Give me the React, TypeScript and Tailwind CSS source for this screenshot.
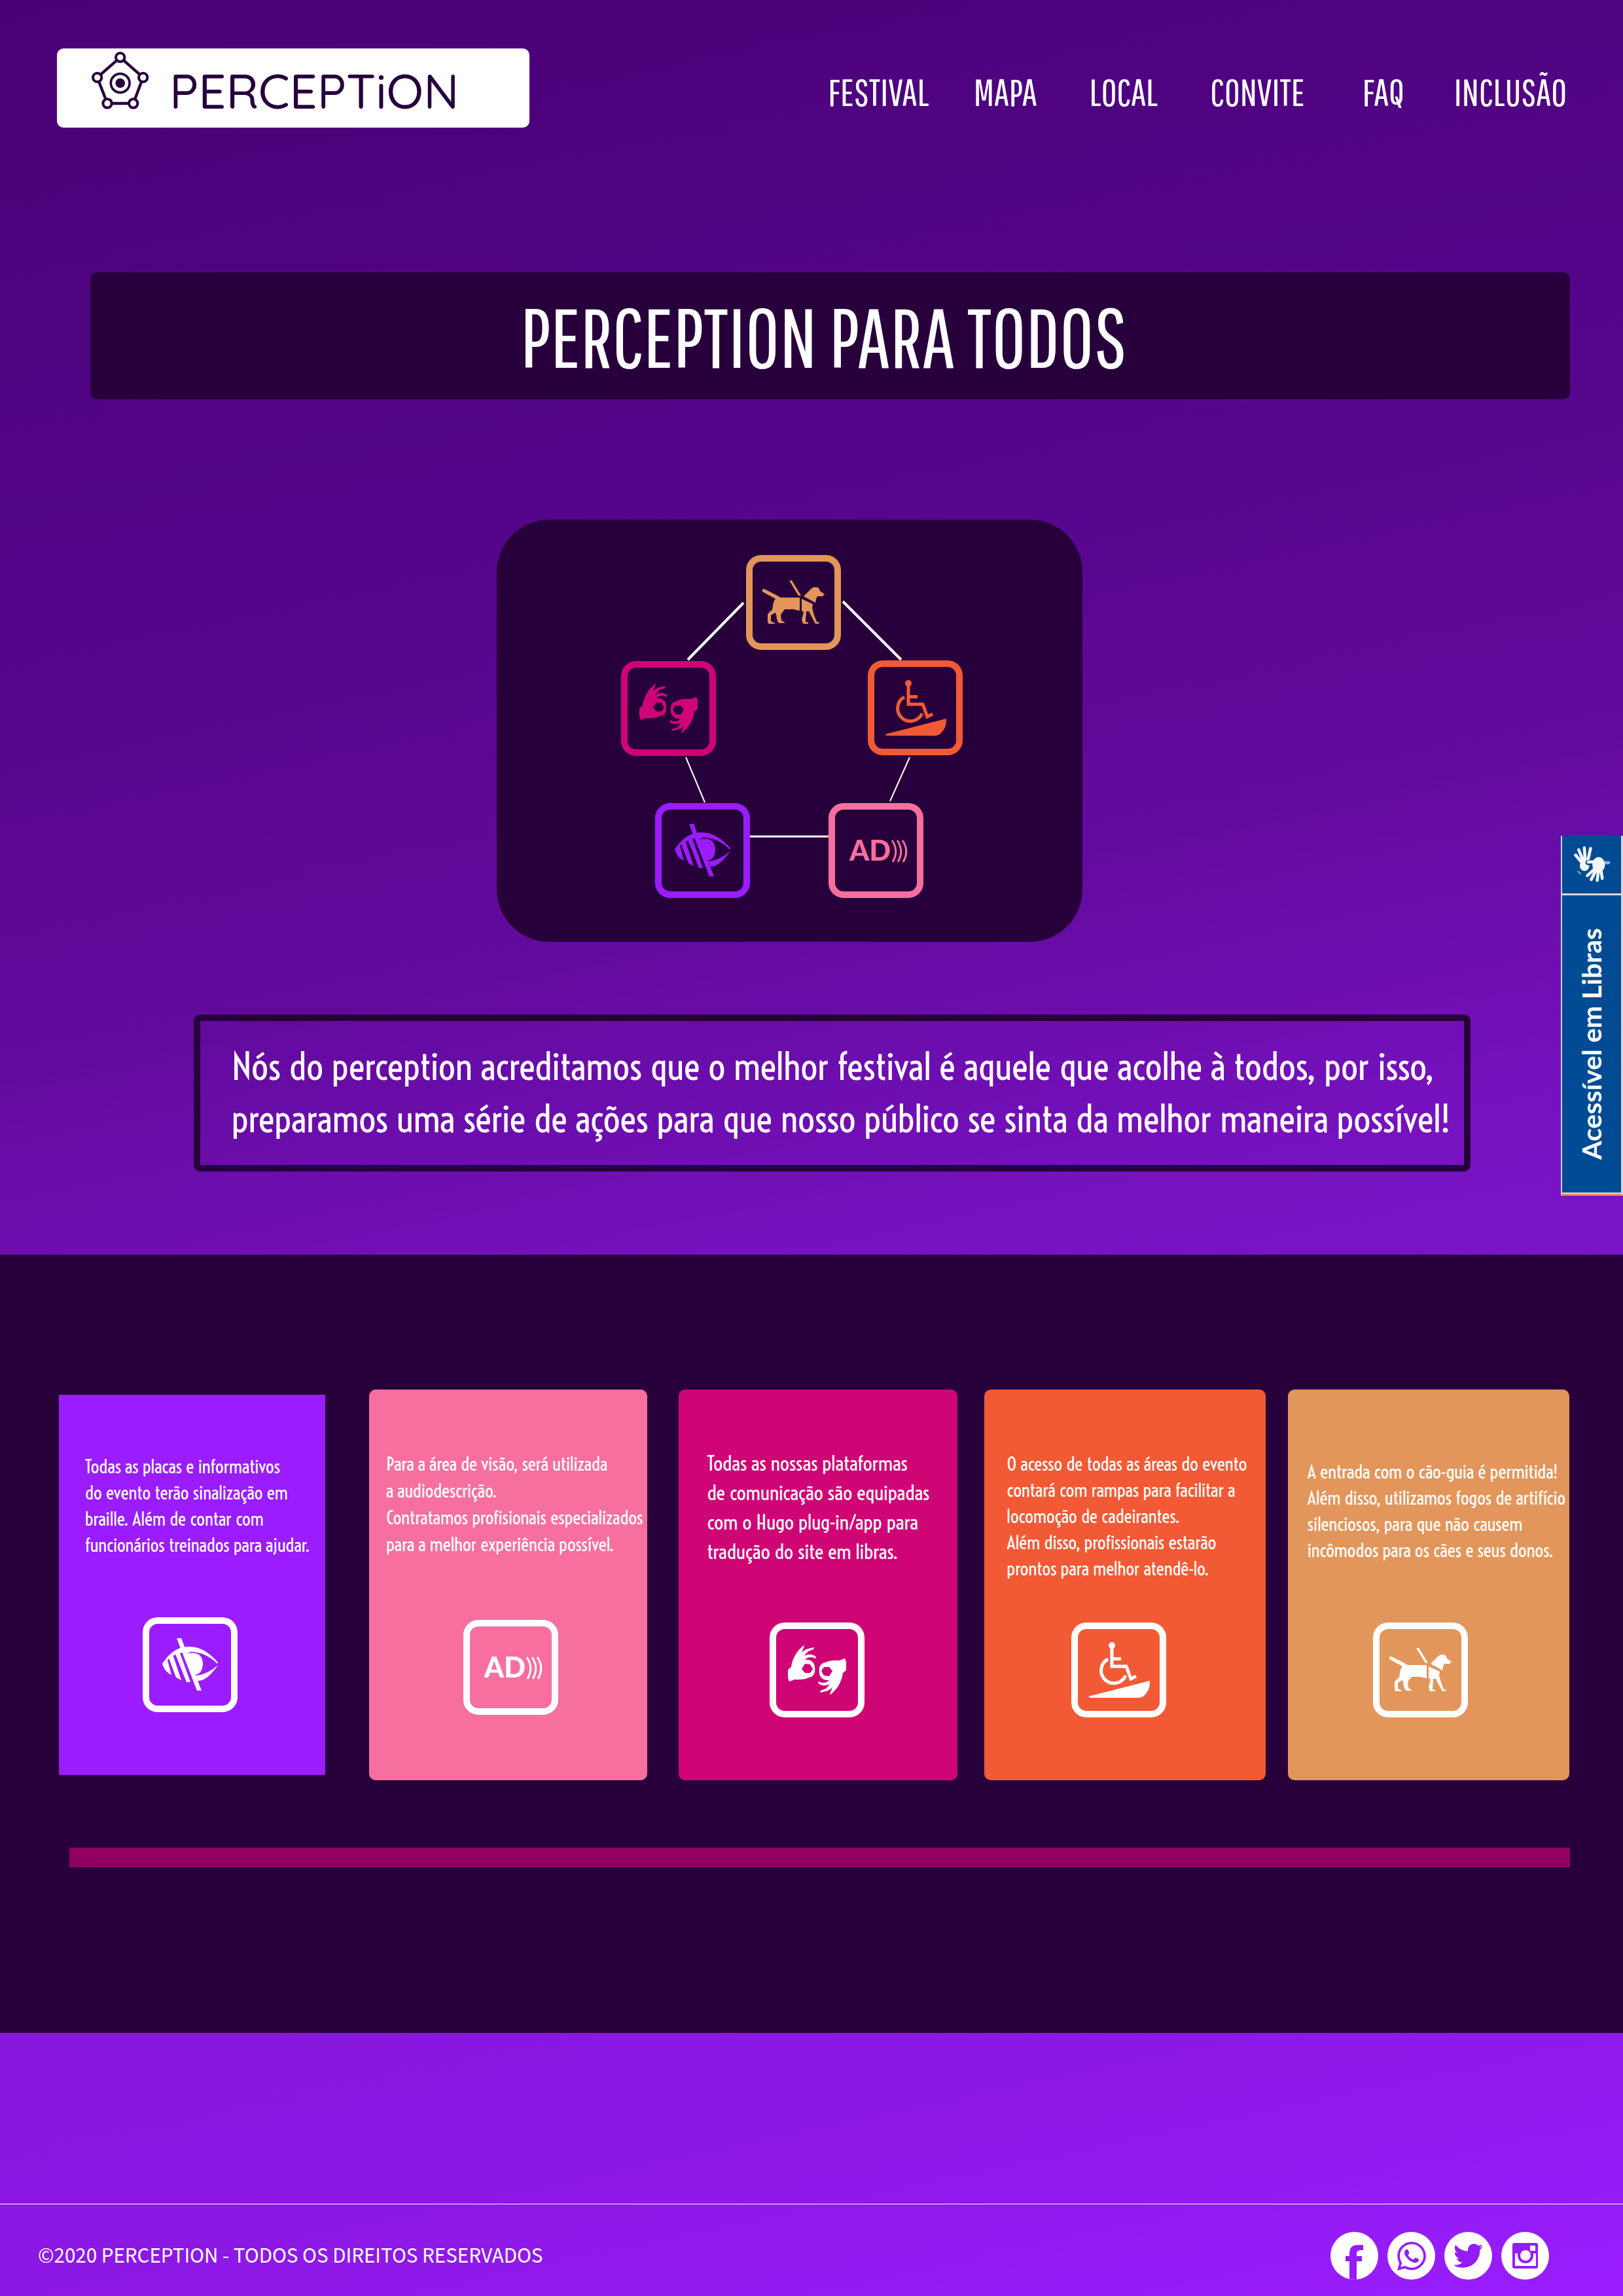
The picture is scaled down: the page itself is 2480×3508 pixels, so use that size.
import React from "react";
import { FaTwitter, FaWhatsapp } from "react-icons/fa";

const navItems = [
  { label: "Festival", gap: "" },
  { label: "Mapa", gap: "ml-17" },
  { label: "Local", gap: "ml-20" },
  { label: "Convite", gap: "ml-20" },
  { label: "FAQ", gap: "ml-22" },
  { label: "Inclusão", gap: "ml-19" },
];

function DogIcon() {
  return (
    <g fill="currentColor">
      <path d="M66 39H70L84 62H80Z" />
      <path d="M25 52L28 52L46 61Q50 64 54 65H82V85L76 84Q72 82 67 83H59L53 91L54 100L59 103V104H50L47 98Q47 93 45 88L38 92L38 101L44 104V105H34L33 101V91Q36 86 40 84L41 77Q42 70 45 67L25 56Z" />
      <path d="M85 67L102 75L101 81L104 92L108 102L112 103L111 105H106Q102 98 96 86H92Q92 92 91 97L91 102L95 103V105H87L85 99L88 87L85 85Z" />
      <path d="M88 63L99 52Q102 49 105 49Q111 49 112 52L113 55L120 60L117 63H109Q107 66 106 73Z" />
    </g>
  );
}

const handPath =
  "M28 72L33 68Q34 60 37 54Q41 44 52 35L53 36L49 46Q54 41 59 40L68 38L67 41L59 44Q55 48 53 51Q59 48 64 49Q69 50 71 53L70 55Q66 53 63 53Q57 53 54 57Q63 56 67 62Q70 66 69 76Q67 83 60 84Q52 88 38 87L31 90Q29 90 28 84Z M49 71L54 77H62L66 71L62 64L54 63Z";

function HandsIcon() {
  return (
    <g fill="currentColor" fillRule="evenodd">
      <path d={handPath} />
      <path d={handPath} transform="rotate(180 72.5 72.5)" />
    </g>
  );
}

function WheelchairIcon() {
  return (
    <g>
      <circle cx="62" cy="35" r="5" fill="currentColor" />
      <path
        d="M62 38V67H84L91 86L99 82M62 55.500H76M56 56A19.500 19.500 0 1 0 83 81"
        fill="none"
        stroke="currentColor"
        strokeWidth="5"
      />
      <path d="M26 113L120 89Q120 100 117 104Q112 114 104 115H29Z" fill="currentColor" />
    </g>
  );
}

function EyeIcon() {
  return (
    <g fill="currentColor">
      <path d="M52 32H59L90 112H83Z" />
      <path d="M30 71Q46 46 68 45L72 55L60 54Q45 57 37 66Z" />
      <path d="M30 71L37 62L44 88Q34 84 30 71Z" />
      <path d="M39 60L46 57L59 96L51 92Z" />
      <path d="M50 56L56 52L73 99H67Z" />
      <path d="M66 45Q92 42 115 69L114 71Q94 51 68 53Z" />
      <path d="M67 56Q90 50 92 70Q92 86 80 88Z" />
      <path d="M115 73Q98 98 84 97L81 89Q98 88 115 73Z" />
    </g>
  );
}

function AudioDescriptionIcon() {
  return (
    <g>
      <text x="32" y="88" fill="currentColor" fontFamily="Lato" fontSize="43" fontWeight="900">
        AD
      </text>
      <path
        d="M97 57Q108 73 98 90M105 57Q116 73 106 90M113 57Q124 73 114 90"
        fill="none"
        stroke="currentColor"
        strokeWidth="3"
      />
    </g>
  );
}

const icons = {
  dog: DogIcon,
  hands: HandsIcon,
  wheelchair: WheelchairIcon,
  eye: EyeIcon,
  audio: AudioDescriptionIcon,
};
type IconName = keyof typeof icons;

function Tile({ name, label, className }: { name: IconName; label: string; className: string }) {
  const Glyph = icons[name];
  return (
    <svg viewBox="0 0 145 145" role="img" aria-label={label} className={`h-[145px] w-[145px] ${className}`}>
      <rect x="5" y="5" width="135" height="135" rx="18" fill="none" stroke="currentColor" strokeWidth="10" />
      <Glyph />
    </svg>
  );
}

function LogoMark() {
  return (
    <svg viewBox="27 27 270 270" className="mt-1 h-[90px] w-[90px] self-start text-[#27003b]" aria-hidden="true">
      <g fill="none" stroke="currentColor" strokeWidth="12">
        <path d="M161 56L266 148L221 267H102L56 148Z" strokeWidth="13" />
        <g fill="#fff">
          <circle cx="161" cy="56" r="20" />
          <circle cx="56" cy="148" r="20" />
          <circle cx="266" cy="148" r="20" />
          <circle cx="102" cy="267" r="20" />
          <circle cx="221" cy="267" r="20" />
        </g>
        <circle cx="161" cy="174" r="43" strokeWidth="11" />
      </g>
      <circle cx="161" cy="174" r="22" fill="currentColor" />
    </svg>
  );
}

function LibrasHands() {
  return (
    <svg viewBox="120 90 190 195" className="h-[60px] w-[60px]" aria-hidden="true">
      <g stroke="#f4f6f8" strokeWidth="15" strokeLinecap="round" fill="#f4f6f8">
        <path d="M180 192L135 140M180 185L151 114M184 185L179 104M192 185L210 107" fill="none" />
        <ellipse cx="180" cy="192" rx="16" ry="20" />
        <path d="M148 222L160 232" strokeWidth="8" opacity="0.5" />
      </g>
      <g stroke="#004b93" strokeWidth="26" strokeLinecap="round" fill="#004b93">
        <path d="M235 205L194 242M240 210L213 262M250 210L243 266M260 205L268 256M240 180L198 177" fill="none" />
      </g>
      <g stroke="#f4f6f8" strokeWidth="15" strokeLinecap="round" fill="#f4f6f8">
        <path d="M235 205L194 242M240 210L213 262M250 210L243 266M260 205L268 256M245 172L198 175" fill="none" />
        <ellipse cx="250" cy="188" rx="24" ry="30" />
        <path d="M275 178H300" opacity="0.6" />
      </g>
    </svg>
  );
}

function FacebookGlyph() {
  return (
    <svg viewBox="0 0 73 73" className="h-full w-full" aria-hidden="true">
      <path
        d="M29 73V45H23V37H29V33Q29 20 42 20H50V28H45Q40 29 40 33V37H48V45H40V73Z"
        fill="#951bf7"
      />
    </svg>
  );
}

function InstagramGlyph() {
  return (
    <svg viewBox="0 0 39 39" className="h-[39px] w-[39px]" aria-hidden="true">
      <rect width="39" height="39" rx="3" fill="#951bf7" />
      <rect x="4" y="16" width="32" height="19" fill="#fff" />
      <circle cx="20" cy="19" r="12" fill="#951bf7" />
      <circle cx="20" cy="19" r="8" fill="#fff" />
      <rect x="27" y="4" width="8" height="8" fill="#fff" />
    </svg>
  );
}

const nodes: { name: IconName; label: string; className: string }[] = [
  { name: "dog", label: "Cão-guia", className: "absolute left-[381px] top-[54px] text-[#e2965b]" },
  { name: "hands", label: "Libras", className: "absolute left-[190px] top-[216px] text-[#cf0475]" },
  { name: "wheelchair", label: "Rampa de acesso", className: "absolute left-[567px] top-[215px] text-[#f25a35]" },
  { name: "eye", label: "Baixa visão", className: "absolute left-[242px] top-[433px] text-[#9a1cff]" },
  { name: "audio", label: "Audiodescrição", className: "absolute left-[507px] top-[433px] text-[#f76f9f]" },
];

const cards: { icon: IconName; label: string; lines: string[]; card: string; text: string; tile: string }[] = [
  {
    icon: "eye",
    label: "Baixa visão",
    lines: [
      "Todas as placas e informativos",
      "do evento terão sinalização em",
      "braille. Além de contar com",
      "funcionários treinados para ajudar.",
    ],
    card: "mt-2 mb-2 grow-[407] rounded-[2px] bg-[#9a1cff] pt-[90px] pb-24",
    text: "ml-10 text-[28px] leading-[40px]",
    tile: "ml-32",
  },
  {
    icon: "audio",
    label: "Audiodescrição",
    lines: [
      "Para a área de visão, será utilizada",
      "a audiodescrição.",
      "Contratamos profisionais especializados",
      "para a melhor experiência possível.",
    ],
    card: "ml-[67px] grow-[425] rounded-[10px] bg-[#f76f9f] pt-[93px] pb-25",
    text: "ml-[26px] text-[28px] leading-[41px]",
    tile: "ml-36",
  },
  {
    icon: "hands",
    label: "Libras",
    lines: [
      "Todas as nossas plataformas",
      "de comunicação são equipadas",
      "com o Hugo plug-in/app para",
      "tradução do site em libras.",
    ],
    card: "ml-12 grow-[425] rounded-[10px] bg-[#cf0475] pt-[90px] pb-24",
    text: "ml-[43px] text-[31px] leading-[45px]",
    tile: "ml-[139px]",
  },
  {
    icon: "wheelchair",
    label: "Rampa de acesso",
    lines: [
      "O acesso de todas as áreas do evento",
      "contará com rampas para facilitar a",
      "locomoção de cadeirantes.",
      "Além disso, profissionais estarão",
      "prontos para melhor atendê-lo.",
    ],
    card: "ml-[41px] grow-[430] rounded-[10px] bg-[#f25a35] pt-[94px] pb-24",
    text: "ml-[35px] text-[28px] leading-[40px]",
    tile: "ml-[133px]",
  },
  {
    icon: "dog",
    label: "Cão-guia",
    lines: [
      "A entrada com o cão-guia é permitida!",
      "Além disso, utilizamos fogos de artifício",
      "silenciosos, para que não causem",
      "incômodos para os cães e seus donos.",
    ],
    card: "ml-[34px] grow-[430] rounded-[10px] bg-[#e2965b] pt-[106px] pb-24",
    text: "ml-[30px] text-[28px] leading-[40px]",
    tile: "ml-[130px]",
  },
];

export default function App() {
  return (
    <div className="relative bg-[linear-gradient(168deg,#490075_0%,#54058a_24%,#630a9e_41%,#7612bf_54%,#8f19ea_90%,#991dff_100%)] font-['Voltaire','PT_Sans_Narrow',sans-serif] text-white">
      <header className="flex items-start justify-between pt-[74px] pr-[86px] pl-[87px]">
        <a href="#inicio" aria-label="Perception" className="flex h-[121px] w-[722px] items-center rounded-[10px] bg-white pl-[52px]">
          <LogoMark />
          <span className="ml-[30px] pt-[9px] font-['Quicksand',sans-serif] text-[74px] leading-none font-medium text-[#27003b]">
            PERCEPTiON
          </span>
        </a>
        <nav className="mt-9 flex font-['Pathway_Gothic_One','Bebas_Neue',sans-serif] text-[58px] leading-[60px] uppercase">
          {navItems.map((item) => (
            <a key={item.label} href={`#${item.label.toLowerCase()}`} className={item.gap}>
              {item.label}
            </a>
          ))}
        </nav>
      </header>

      <main>
        <div className="mt-[221px] mr-[81px] ml-[138px] rounded-[10px] bg-[#27003b] pt-[36px] pr-5 pb-[34px]">
          <h1 className="text-center font-['Pathway_Gothic_One','Bebas_Neue',sans-serif] text-[127px] leading-[124px] font-normal uppercase">
            Perception para todos
          </h1>
        </div>

        <div className="relative mt-[184px] ml-[759px] h-[645px] w-[895px] rounded-[80px] bg-[#27003b]">
          <svg viewBox="0 0 895 645" className="absolute inset-0 h-full w-full" aria-hidden="true">
            <g stroke="#fff" fill="none">
              <path d="M377 127L292 214M529 125L618 214" strokeWidth="4" />
              <path d="M289 363L318 432M631 363L601 430" strokeWidth="2" />
              <path d="M387 484H507" strokeWidth="3" />
            </g>
          </svg>
          {nodes.map((node) => (
            <Tile key={node.name} {...node} />
          ))}
        </div>

        <p className="mt-[111px] mr-[233px] ml-[296px] rounded-[10px] border-[10px] border-[#27003b] py-[30px] pl-[48px] text-[57px] leading-[80px] whitespace-nowrap">
          Nós do perception acreditamos que o melhor festival é aquele que acolhe à todos, por isso,
          <br />
          preparamos uma série de ações para que nosso público se sinta da melhor maneira possível!
        </p>

        <section className="mt-[127px] bg-[#27003b] pt-[206px] pb-[253px]">
          <div className="flex min-h-[597px] pr-[82px] pl-[90px]">
            {cards.map((c) => (
              <article key={c.icon} className={`flex basis-0 flex-col ${c.card}`}>
                <p className={`w-0 whitespace-nowrap ${c.text}`}>
                  {c.lines.map((line) => (
                    <React.Fragment key={line}>
                      {line}
                      <br />
                    </React.Fragment>
                  ))}
                </p>
                <Tile name={c.icon} label={c.label} className={`mt-auto ${c.tile}`} />
              </article>
            ))}
          </div>
          <div className="mt-[103px] mr-[81px] ml-[106px] h-[30px] bg-[#8f0061]" />
        </section>
      </main>

      <footer className="mt-[261px] flex items-center justify-between border-t border-white pt-[42px] pr-[113px] pb-[25px] pl-[58px]">
        <p className="font-['Source_Sans_3',sans-serif] text-[33px] leading-[40px]">
          ©2020 PERCEPTION - TODOS OS DIREITOS RESERVADOS
        </p>
        <div className="flex gap-[14px] text-[#951bf7]">
          <a href="#facebook" aria-label="Facebook" className="flex h-[73px] w-[73px] items-center justify-center overflow-hidden rounded-full bg-white">
            <FacebookGlyph />
          </a>
          <a href="#whatsapp" aria-label="WhatsApp" className="flex h-[73px] w-[73px] items-center justify-center rounded-full bg-white">
            <FaWhatsapp size={50} />
          </a>
          <a href="#twitter" aria-label="Twitter" className="flex h-[73px] w-[73px] items-center justify-center rounded-full bg-white">
            <FaTwitter size={45} />
          </a>
          <a href="#instagram" aria-label="Instagram" className="flex h-[73px] w-[73px] items-center justify-center rounded-full bg-white">
            <InstagramGlyph />
          </a>
        </div>
      </footer>

      <a
        href="#libras"
        className="absolute top-[1277px] right-0 flex h-[550px] w-[95px] flex-col border-r-3 border-b-3 border-l-2 border-r-[#d5d3e6] border-b-[#ef8a4a] border-l-[#c9cfe0] bg-[#004b93]"
      >
        <span className="flex h-[91px] items-center justify-center border-b-3 border-[#d5dbe8]">
          <LibrasHands />
        </span>
        <span className="flex flex-1 items-center justify-center border-b-2 border-[#d5dbe8]">
          <span className="rotate-180 font-['Lato',sans-serif] text-[41px] leading-[48px] font-bold whitespace-nowrap [writing-mode:vertical-rl]">
            Acessível em Libras
          </span>
        </span>
      </a>
    </div>
  );
}
